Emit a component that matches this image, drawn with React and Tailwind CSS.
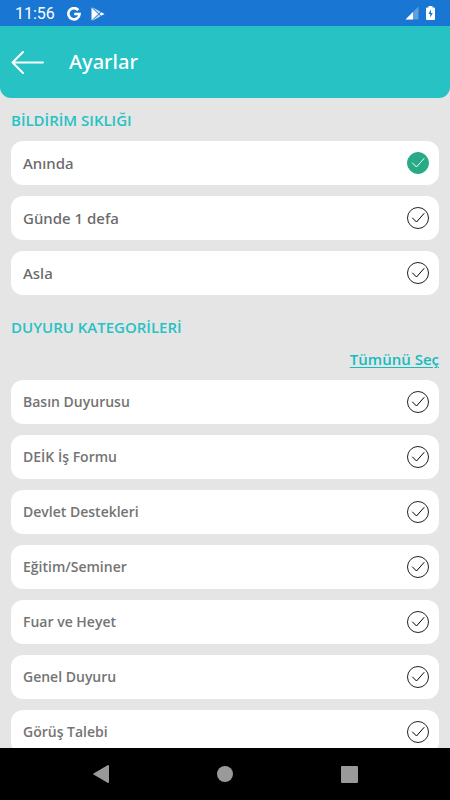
import { useState } from "react";

const frequencies = ["Anında", "Günde 1 defa", "Asla"];

const categories = [
  "Basın Duyurusu",
  "DEİK İş Formu",
  "Devlet Destekleri",
  "Eğitim/Seminer",
  "Fuar ve Heyet",
  "Genel Duyuru",
  "Görüş Talebi",
];

function StatusBar() {
  return (
    <div className="h-[26px] shrink-0 bg-[#1976d2] text-white flex items-center justify-between px-[15px]">
      <div className="flex items-center pt-px">
        <span className="font-['Roboto',sans-serif] text-base leading-5 w-[52px]">11:56</span>
        {/* Google */}
        <svg className="w-[14px] h-[14px]" viewBox="0 0 14 14" fill="none" stroke="currentColor" strokeWidth="2.6">
          <path d="M11.3 3.1A5.6 5.6 0 1 0 12.6 7H7.2" />
        </svg>
        {/* Play Store */}
        <svg className="w-[14px] h-[14px] ml-[10px]" viewBox="0 0 14 14">
          <path d="M.5.5v13L7.2 7z" fill="#fff" />
          <path d="M1 0 9.6 4.8 7.8 6.6zM1 14 9.6 9.2 7.8 7.4z" fill="#fff" opacity=".75" />
          <path d="M10.2 5.2 13.6 7 10.2 8.8 8.4 7z" fill="#fff" />
        </svg>
      </div>
      <div className="flex items-center gap-[7px]">
        {/* Signal */}
        <svg className="w-[14px] h-[14px]" viewBox="0 0 14 14">
          <path d="M13.5.5v13H.5z" fill="#fff" opacity=".3" />
          <path d="M8 6v7.5H.5z" fill="#fff" />
        </svg>
        {/* Battery */}
        <svg className="w-[9px] h-[14px]" viewBox="0 0 9 14">
          <path d="M2.5 0h4v1.5H8a1 1 0 0 1 1 1V13a1 1 0 0 1-1 1H1a1 1 0 0 1-1-1V2.5a1 1 0 0 1 1-1h1.5z" fill="#fff" />
          <path d="M5 3.5 2.4 8h1.8v3.4L6.8 7H5z" fill="#1976d2" />
        </svg>
      </div>
    </div>
  );
}

function Header() {
  return (
    <header className="h-[72px] shrink-0 bg-[#26c2c4] rounded-b-[11px] text-white flex items-center px-[11px]">
      <button type="button" aria-label="Geri" className="w-[58px]">
        <svg
          className="w-[34px] h-6"
          viewBox="0 0 34 24"
          fill="none"
          stroke="currentColor"
          strokeWidth="2"
          strokeLinecap="round"
          strokeLinejoin="round"
        >
          <path d="M32 12.5H1.5M12 2 1.5 12.5 12 23" />
        </svg>
      </button>
      <h1 className="font-['Noto_Sans',sans-serif] text-xl font-medium">Ayarlar</h1>
    </header>
  );
}

function OptionRow({ type, name, label, checked, onChange }) {
  return (
    <label className="h-11 bg-white rounded-xl pl-3 pr-[10px] flex items-center justify-between">
      {type === "radio" ? (
        <span className="font-['Noto_Sans',sans-serif] text-[15px] font-medium text-[#6a6a6a]">{label}</span>
      ) : (
        <span className="text-sm font-semibold text-[#747474]">{label}</span>
      )}
      <span className="grid place-items-center">
        <input
          type={type}
          name={name}
          checked={checked}
          onChange={onChange}
          className="appearance-none w-[22px] h-[22px] rounded-full border border-[#222] checked:border-[#26ab86] checked:bg-[#26ab86] col-start-1 row-start-1"
        />
        <svg
          className={`w-[22px] h-[22px] col-start-1 row-start-1 pointer-events-none ${checked ? "text-white" : "text-black"}`}
          viewBox="0 0 22 22"
          fill="none"
          stroke="currentColor"
          strokeLinecap="round"
          strokeLinejoin="round"
        >
          <path d="M5.5 11 9.5 15 17 6.5" />
        </svg>
      </span>
    </label>
  );
}

function NavBar() {
  return (
    <nav className="h-[52px] shrink-0 bg-black text-[#9a9a9a] grid grid-cols-[1fr_48px_1fr] items-center">
      <button type="button" aria-label="Geri dön" className="flex justify-center">
        <svg className="w-4 h-[18px]" viewBox="0 0 16 18" fill="currentColor">
          <path d="M15 0q1 0 1 1v16q0 1-1 1L.5 9.6Q0 9 .5 8.4z" />
        </svg>
      </button>
      <button type="button" aria-label="Ana ekran" className="flex justify-center">
        <span className="w-4 h-4 rounded-full bg-[#9a9a9a]" />
      </button>
      <button type="button" aria-label="Son uygulamalar" className="flex justify-center">
        <span className="w-[17px] h-[17px] rounded-[1px] bg-[#9a9a9a]" />
      </button>
    </nav>
  );
}

export default function App() {
  const [frequency, setFrequency] = useState("Anında");
  const [selected, setSelected] = useState([]);

  const toggle = (category) => {
    setSelected((prev) =>
      prev.includes(category) ? prev.filter((c) => c !== category) : [...prev, category]
    );
  };

  return (
    <div lang="tr" className="h-screen flex flex-col bg-[#e5e5e5] font-['Open_Sans','Noto_Sans',sans-serif]">
      <StatusBar />
      <Header />

      <main className="flex-1 min-h-0 overflow-y-auto [scrollbar-width:none] px-[11px] pt-3">
        {/* Notification frequency */}
        <h2 className="text-[15px] leading-5 font-semibold text-[#26c2c4]">BİLDİRİM SIKLIĞI</h2>
        <div className="flex flex-col gap-[11px] mt-[11px]">
          {frequencies.map((item) => (
            <OptionRow
              key={item}
              type="radio"
              name="frequency"
              label={item}
              checked={frequency === item}
              onChange={() => setFrequency(item)}
            />
          ))}
        </div>

        {/* Announcement categories */}
        <h2 className="text-[15px] leading-5 font-semibold text-[#26c2c4] mt-[22px]">DUYURU KATEGORİLERİ</h2>
        <div className="flex justify-end mt-3">
          <button
            type="button"
            onClick={() => setSelected(categories)}
            className="text-[15px] leading-5 font-semibold text-[#14bcbe] underline decoration-1 underline-offset-2"
          >
            Tümünü Seç
          </button>
        </div>
        <div className="flex flex-col gap-[11px] mt-[11px] pb-3">
          {categories.map((item) => (
            <OptionRow
              key={item}
              type="checkbox"
              name="category"
              label={item}
              checked={selected.includes(item)}
              onChange={() => toggle(item)}
            />
          ))}
        </div>
      </main>

      <NavBar />
    </div>
  );
}
